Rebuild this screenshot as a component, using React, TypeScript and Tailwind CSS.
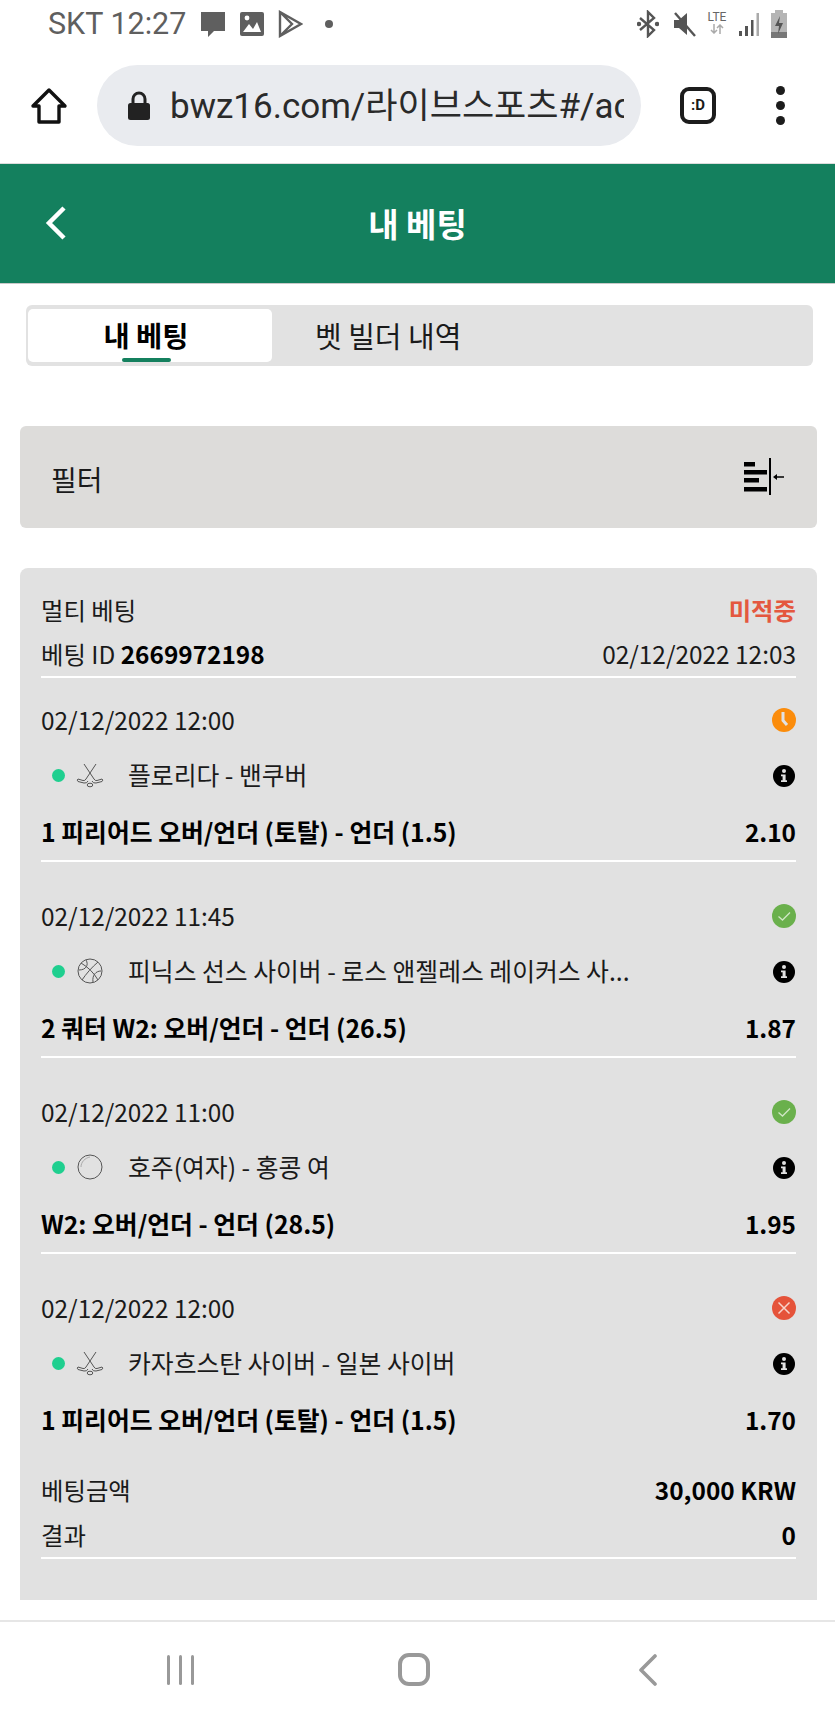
import React from "react";

function Hockey() {
  return (
    <svg width="28" height="28" viewBox="0 0 28 28" fill="none" stroke="#555" strokeWidth="1">
      <path d="M8 3 L18 18 Q19 20 21 19.5 L26 18 Q27.5 19 26 20.5 L20 22 Q17 22.5 16 20" />
      <path d="M20 3 L10 18 Q9 20 7 19.5 L2 18 Q0.5 19 2 20.5 L8 22 Q11 22.5 12 20" />
      <ellipse cx="14" cy="24" rx="2.8" ry="1.8" />
    </svg>
  );
}
function Ball() {
  return (
    <svg width="28" height="28" viewBox="0 0 28 28" fill="none" stroke="#555" strokeWidth="1">
      <circle cx="14" cy="14" r="12" />
      <path d="M5 6 C12 10 18 16 22 23 M22 5 C16 10 10 17 6 23 M10 3 C13 8 10 13 3 13 M25 14 C20 14 16 18 17 25" />
    </svg>
  );
}
function Puck() {
  return (
    <svg width="28" height="28" viewBox="0 0 28 28" fill="none" stroke="#555" strokeWidth="1">
      <circle cx="14" cy="14" r="12" />
      <path d="M5 14 C5 9 9 5 14 4" stroke="#aaa" />
    </svg>
  );
}
function Info() {
  return (
    <svg width="22" height="22" viewBox="0 0 22 22">
      <circle cx="11" cy="11" r="11" fill="#000" />
      <circle cx="11" cy="6" r="2" fill="#e1e1e1" />
      <path d="M8 9.5 H12.6 V15.2 H14 V17 H8 V15.2 H9.6 V11.3 H8 Z" fill="#e1e1e1" />
    </svg>
  );
}
function Status({ kind }: { kind: "wait" | "ok" | "bad" }) {
  if (kind === "wait")
    return (
      <svg width="24" height="24" viewBox="0 0 24 24">
        <circle cx="12" cy="12" r="12" fill="#fb8c0b" />
        <path d="M11 4 V12.5 L15 17" fill="none" stroke="#e1e1e1" strokeWidth="3" />
      </svg>
    );
  if (kind === "ok")
    return (
      <svg width="24" height="24" viewBox="0 0 24 24">
        <circle cx="12" cy="12" r="12" fill="#6ab04c" />
        <path d="M6.5 12.5 L10.5 16 L18 8.5" fill="none" stroke="#cfe6c4" strokeWidth="1.3" />
      </svg>
    );
  return (
    <svg width="24" height="24" viewBox="0 0 24 24">
      <circle cx="12" cy="12" r="12" fill="#e5533a" />
      <path d="M6.5 6.5 L17.5 17.5 M17.5 6.5 L6.5 17.5" fill="none" stroke="#f7d4cc" strokeWidth="1.5" />
    </svg>
  );
}

type Leg = { date: string; status: "wait" | "ok" | "bad"; icon: React.ReactNode; teams: string; market: string; odds: string };
const legs: Leg[] = [
  { date: "02/12/2022 12:00", status: "wait", icon: <Hockey />, teams: "플로리다 - 밴쿠버", market: "1 피리어드 오버/언더 (토탈) - 언더 (1.5)", odds: "2.10" },
  { date: "02/12/2022 11:45", status: "ok", icon: <Ball />, teams: "피닉스 선스 사이버 - 로스 앤젤레스 레이커스 사...", market: "2 쿼터 W2: 오버/언더 - 언더 (26.5)", odds: "1.87" },
  { date: "02/12/2022 11:00", status: "ok", icon: <Puck />, teams: "호주(여자) - 홍콩 여", market: "W2: 오버/언더 - 언더 (28.5)", odds: "1.95" },
  { date: "02/12/2022 12:00", status: "bad", icon: <Hockey />, teams: "카자흐스탄 사이버 - 일본 사이버", market: "1 피리어드 오버/언더 (토탈) - 언더 (1.5)", odds: "1.70" },
];

export default function App() {
  return (
    <div className="w-[835px] h-[1717px] overflow-hidden bg-white flex flex-col text-[#1a1a1a] font-['Noto_Sans_CJK_KR','Noto_Sans',sans-serif]">
      {/* status bar */}
      <div className="h-[54px] shrink-0 flex items-center pl-[48px] pr-[47px] pb-[6px] justify-between text-[#5f5f5f]">
        <div className="flex items-center">
          <span className="font-['Roboto',sans-serif] text-[30.5px] leading-none w-[150px] whitespace-nowrap">SKT 12:27</span>
          <svg width="28" height="28" viewBox="0 0 28 28" className="ml-[1px]"><path d="M2 2 H26 V21 H15 L9 27 V21 H2 Z" fill="#5f5f5f" /></svg>
          <svg width="26" height="26" viewBox="0 0 26 26" className="ml-[12px]"><rect x="1" y="1" width="24" height="24" rx="2" fill="#5f5f5f" /><path d="M4 21 L10 13 L14 18 L18 11 L22 21 Z" fill="#fff" /><circle cx="8" cy="7" r="2.4" fill="#fff" /></svg>
          <svg width="26" height="28" viewBox="0 0 26 28" className="ml-[12px]" fill="none" stroke="#5f5f5f" strokeWidth="2.4"><path d="M3 2 L24 14 L3 26 Z M3 2 L15 14 L3 26" /></svg>
          <span className="ml-[22px] w-[8px] h-[8px] rounded-full bg-[#5f5f5f]" />
        </div>
        <div className="flex items-center">
          <svg width="22" height="28" viewBox="0 0 22 28" fill="none" stroke="#555" strokeWidth="2.4"><path d="M3 8 L17 20 L11 26 V2 L17 8 L3 20" /><circle cx="2" cy="14" r="1" fill="#555" /><circle cx="20" cy="14" r="1" fill="#555" /></svg>
          <svg width="26" height="28" viewBox="0 0 26 28" className="ml-[12px]"><path d="M3 10 H8 L16 3 V25 L8 18 H3 Z" fill="#555" /><path d="M4 3 L24 26" stroke="#555" strokeWidth="2.4" /></svg>
          <div className="ml-[8px] w-[24px] h-[28px] flex flex-col items-center justify-start">
            <span className="font-['Roboto',sans-serif] text-[12px] leading-[14px] text-[#666]">LTE</span>
            <svg width="16" height="10" viewBox="0 0 16 10" fill="none" stroke="#aaa" strokeWidth="1.5"><path d="M5 0 V9 M2 6 L5 9 L8 6 M11 10 V1 M8 4 L11 1 L14 4" /></svg>
          </div>
          <svg width="22" height="26" viewBox="0 0 22 26" className="ml-[9px]" fill="#555"><rect x="1" y="20" width="3" height="5" /><rect x="7" y="15" width="3" height="10" /><rect x="13" y="9" width="2.5" height="16" /><rect x="18.5" y="2" width="2.5" height="23" fill="#aaa" /></svg>
          <svg width="18" height="30" viewBox="0 0 18 30" className="ml-[10px]"><path d="M5 1 H13 V4 H17 V29 H1 V4 H5 Z" fill="#b5b5b5" /><path d="M1 23 H17 V29 H1 Z" fill="#777" /><path d="M10 7 L5 17 H9 L8 25 L13 14 H9 Z" fill="#555" /></svg>
        </div>
      </div>

      {/* browser bar */}
      <div className="h-[110px] shrink-0 border-b border-[#dcdcdc] flex items-center pb-[6px]">
        <svg width="38" height="38" viewBox="0 0 38 38" className="ml-[30px]" fill="none" stroke="#111" strokeWidth="3.4" strokeLinejoin="round"><path d="M19 3 L35 19 H29 V35 H9 V19 H3 Z" /></svg>
        <div className="ml-[29px] w-[544px] h-[81px] rounded-full bg-[#e9ebef] flex items-center pl-[30px]">
          <svg width="24" height="30" viewBox="0 0 24 30" className="shrink-0"><path d="M6 13 V8 A6 6 0 0 1 18 8 V13" fill="none" stroke="#222" strokeWidth="3" /><rect x="1" y="12" width="22" height="17" rx="2.5" fill="#222" /></svg>
          <div className="ml-[19px] overflow-hidden whitespace-nowrap text-[35px] leading-none text-[#2a2a2a] font-['Roboto','Noto_Sans_CJK_KR',sans-serif] w-[454px] pt-[1px]">bwz16.com/라이브스포츠#/ac</div>
        </div>
        <div className="ml-[39px] w-[36px] h-[37px] rounded-[9px] border-[4px] border-[#1c1c1c] flex items-center justify-center font-['Roboto',sans-serif] text-[15px] font-bold leading-none">:D</div>
        <div className="ml-[60px] flex flex-col gap-[6px]">
          <span className="w-[9px] h-[9px] rounded-full bg-[#1c1c1c]" />
          <span className="w-[9px] h-[9px] rounded-full bg-[#1c1c1c]" />
          <span className="w-[9px] h-[9px] rounded-full bg-[#1c1c1c]" />
        </div>
      </div>

      {/* green header */}
      <div className="h-[120px] shrink-0 bg-[#14805e] border-b border-[#c9c9c9] flex items-center relative">
        <svg width="24" height="36" viewBox="0 0 24 36" className="absolute left-[44px] top-[41px]" fill="none" stroke="#fff" strokeWidth="4.5"><path d="M20 3 L5 18 L20 33" /></svg>
        <div className="w-full text-center text-white font-bold text-[33px] leading-none">내 베팅</div>
      </div>

      {/* tabs */}
      <div className="mt-[21px] ml-[26px] w-[787px] h-[61px] shrink-0 bg-[#e2e2e2] rounded-[6px] flex items-center pl-[2px]">
        <div className="w-[244px] h-[53px] bg-white rounded-[5px] relative flex items-center justify-center pr-[8px] pb-[1px]">
          <span className="font-bold text-[28.5px] leading-none text-black">내 베팅</span>
          <span className="absolute left-[94px] bottom-0 w-[49px] h-[4px] rounded-[2px] bg-[#14805e]" />
        </div>
        <span className="ml-[43px] text-[29px] leading-none text-[#1a1a1a] pb-[1px]">벳 빌더 내역</span>
      </div>

      {/* filter */}
      <div className="mt-[60px] ml-[20px] w-[797px] h-[102px] shrink-0 bg-[#dddcda] rounded-[6px] flex items-center justify-between pl-[31px] pr-[32px]">
        <span className="text-[28px] leading-none pt-[4px]">필터</span>
        <svg width="41" height="37" viewBox="0 0 41 37" className="mb-[2px]"><rect x="0" y="4" width="11" height="4.5" fill="#000" /><rect x="0" y="12" width="23" height="4.5" fill="#000" /><rect x="0" y="20" width="15" height="4.5" fill="#000" /><rect x="0" y="29" width="23" height="4.5" fill="#000" /><rect x="25" y="0" width="2" height="37" fill="#000" /><path d="M29 19 L33 16 V18.3 H40 V19.7 H33 V22 Z" fill="#000" /></svg>
      </div>

      {/* card */}
      <div className="mt-[40px] ml-[20px] w-[797px] h-[1032px] shrink-0 bg-[#e1e1e1] rounded-t-[8px] px-[21px] pt-[20px] text-[24.4px]">
        <div className="h-[45px] flex items-center justify-between">
          <span>멀티 베팅</span>
          <span className="font-bold text-[#e4583f]">미적중</span>
        </div>
        <div className="h-[43px] flex items-center justify-between">
          <span>베팅 ID <b className="font-bold text-black">2669972198</b></span>
          <span>02/12/2022 12:03</span>
        </div>
        <div className="h-[2px] bg-white" />

        {legs.map((l, i) => (
          <div key={i} className={i === 0 ? "pt-[20px]" : "pt-[32px]"}>
            <div className="h-[44px] flex items-center justify-between">
              <span>{l.date}</span>
              <Status kind={l.status} />
            </div>
            <div className="mt-[11px] h-[44px] flex items-center">
              <span className="ml-[11px] w-[13px] h-[13px] rounded-full bg-[#1fcf8f] shrink-0" />
              <span className="ml-[11px] w-[28px] shrink-0 flex">{l.icon}</span>
              <span className="ml-[24px] flex-1 whitespace-nowrap text-[24.8px]">{l.teams}</span>
              <span className="mr-[1px] mt-[2px] flex"><Info /></span>
            </div>
            <div className="mt-[13px] h-[44px] flex items-center justify-between font-bold text-black">
              <span className="text-[24.8px]">{l.market}</span>
              <span>{l.odds}</span>
            </div>
            {i < 3 ? <div className="mt-[6px] h-[2px] bg-white" /> : null}
          </div>
        ))}

        <div className="mt-[27px] h-[43px] flex items-center justify-between">
          <span>베팅금액</span>
          <span className="font-bold text-black">30,000 KRW</span>
        </div>
        <div className="mt-[2px] h-[43px] flex items-center justify-between">
          <span>결과</span>
          <span className="font-bold text-black">0</span>
        </div>
        <div className="h-[2px] bg-white" />
      </div>

      {/* nav bar */}
      <div className="mt-[20px] flex-1 border-t-2 border-[#e6e6e6] flex items-center">
        <div className="ml-[167px] flex gap-[9px]">
          <span className="w-[3px] h-[30px] bg-[#999] rounded-sm" />
          <span className="w-[3px] h-[30px] bg-[#999] rounded-sm" />
          <span className="w-[3px] h-[30px] bg-[#999] rounded-sm" />
        </div>
        <span className="ml-[204px] w-[32px] h-[33px] rounded-[11px] border-[4px] border-[#999]" />
        <svg width="20" height="32" viewBox="0 0 20 32" className="ml-[208px]" fill="none" stroke="#999" strokeWidth="3.6" strokeLinecap="round" strokeLinejoin="round"><path d="M17 2 L3 16 L17 30" /></svg>
      </div>
    </div>
  );
}
